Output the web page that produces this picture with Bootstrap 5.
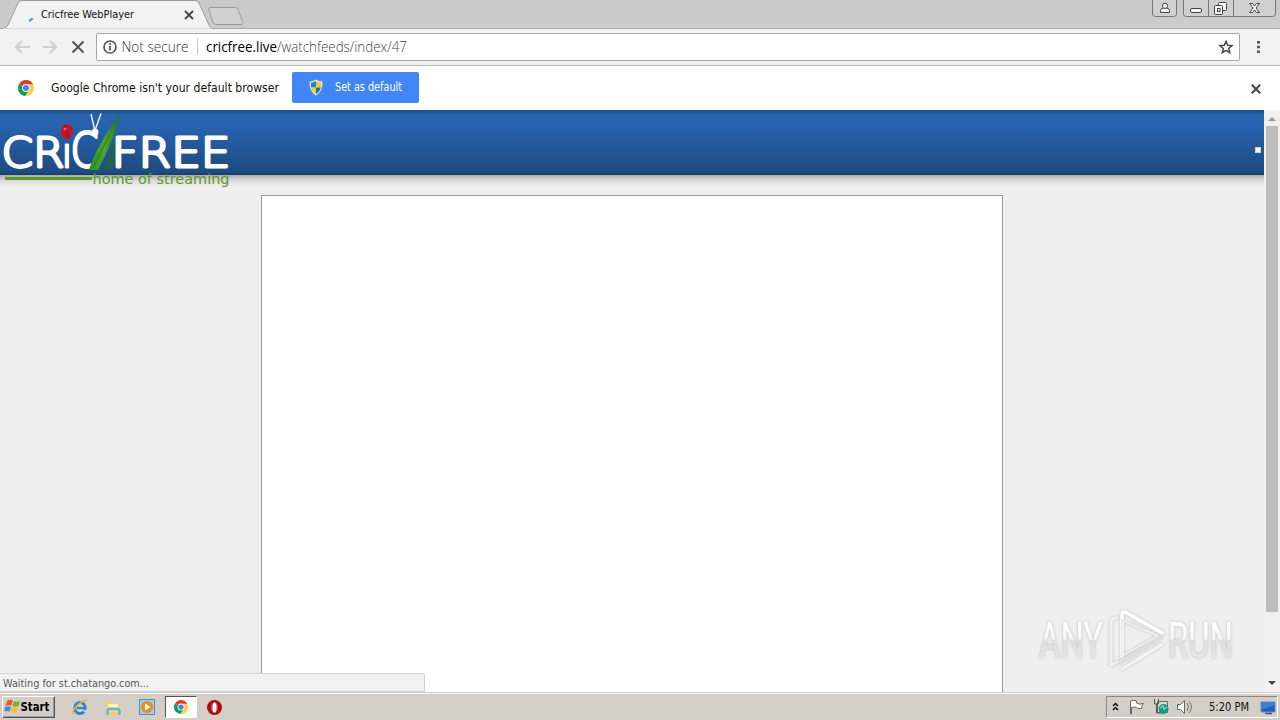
<!DOCTYPE html>
<html lang="en">
<head>
<meta charset="utf-8">
<title>Cricfree WebPlayer</title>
<link href="https://cdn.jsdelivr.net/npm/bootstrap@5.3.0/dist/css/bootstrap.min.css" rel="stylesheet">
<style>
body{height:720px;overflow:hidden;font-family:"DejaVu Sans Condensed","DejaVu Sans","Noto Sans",sans-serif;font-size:11px;line-height:1;color:#111;background:#efefef}
svg{display:block;flex:none;overflow:visible}
svg text{white-space:pre}
.tabstrip{height:29px;background:linear-gradient(#c9c9c9,#cdcdcd)}
.toolbar{height:37px;background:#f2f2f2;border-bottom:1px solid #b5b5b5;padding:4px 11px 4px 13px}
.omnibox{height:28px;width:1144px;border:1px solid #a7a7a7;border-radius:2px;margin-left:10px;padding:0 6px}
.address{font-family:"Open Sans","Noto Sans",sans-serif;font-weight:300}
.infobar{height:44px;padding:0 18px 2px 17px}
.default-btn{width:127px;height:31px;background:#4285f4;border-radius:2px;padding:0 16px 0 16px;border:0}
.viewport{height:582px;background:#efefef}
.site-head{height:65px;background:linear-gradient(#1c4d83 0,#2863b0 5px,#2863b0 14px,#1e4b80 62px,#173b65);}
.head-shadow{height:11px;background:linear-gradient(#a9a9a9,#d8d8d8 45%,#efefef)}
.player{width:742px;height:497px;margin:9px 0 0 261px;border:1px solid #999;border-bottom:0}
.logo{left:0;top:0}
.dot{width:6px;height:6px;right:3px;top:37px;background:#fff;border:1px solid #c8d0e4}
.watermark{left:1030px;top:495px}
.status{left:0;bottom:0;width:425px;height:19px;background:#f2f2f2;border:1px solid #d2d2d2;border-left:0;border-radius:0 3px 0 0;padding-left:3px}
.scroller{width:16px;background:#f1f1f1}
.thumb{width:12px;height:486px;background:#bdbdbd}
.taskbar{height:28px;background:#d5cec6;border-top:1px solid #d0cfc7;box-shadow:inset 0 1px #fff;padding:3px 2px 2px}
.start{width:53px;height:22px;border:1px solid;border-color:#fff #555 #555 #fff;box-shadow:inset -1px -1px #999;padding:0 2px;flex:none}
.active-task{width:32px;height:22px;border:1px solid;border-color:#555 #fff #fff #555;background:#fff}
.tray{width:172px;height:22px;border:1px solid;border-color:#888 #fff #fff #888}
</style>
</head>
<body class="d-flex flex-column">
<svg width="0" height="0" class="position-absolute">
<defs>
<g id="chrome"><circle cx="8" cy="8" r="8" fill="#fff"/><path d="M8 8 1.100 4A8 8 0 0 1 15 4z" fill="#df3a2d"/><path d="M8 8 1.100 4A8 8 0 0 0 7.400 16L11.400 10z" fill="#159b58"/><path d="M8 4.200H15A8 8 0 0 1 7.400 16L11.300 10z" fill="#fdce43"/><circle cx="8" cy="8" r="4" fill="#f8f8f8"/><circle cx="8" cy="8" r="3" fill="#4285f4"/></g>
<linearGradient id="mark" gradientUnits="userSpaceOnUse" x1="0" y1="622" x2="0" y2="659"><stop offset="0" stop-color="#fff"/><stop offset=".46" stop-color="#f8f8f8"/><stop offset=".5" stop-color="#dfdfdf"/><stop offset="1" stop-color="#e6e6e6"/></linearGradient>
<filter id="soft" x="-10%" y="-20%" width="120%" height="140%"><feDropShadow dx="0" dy="0" stdDeviation="1.600" flood-color="#999" flood-opacity=".6"/></filter>
<linearGradient id="blade"><stop offset="0" stop-color="#2b8d1d"/><stop offset=".5" stop-color="#4fa52d"/><stop offset="1" stop-color="#247324"/></linearGradient>
</defs>
</svg>

<header class="tabstrip flex-shrink-0">
<svg width="1280" height="29" viewBox="0 0 1280 29">
<path d="M0 28.500H1280" stroke="#aaa"/>
<path d="M0 29Q6 29 8 25L18 3Q19 .5 22 .5H195Q198 .5 199 3L209 25Q210 28.500 214 29z" fill="#f2f2f2" stroke="#999"/>
<path d="M3 29.500H213" stroke="#f2f2f2" stroke-width="2"/>
<path d="M29 21q3-1 3.500-3" fill="none" stroke="#4b8fdc" stroke-width="2"/>
<text x="41" y="18" font-size="11" textLength="93" lengthAdjust="spacingAndGlyphs" fill="#111">Cricfree WebPlayer</text>
<path d="m185 11 8 8m0-8-8 8" stroke="#444" stroke-width="1.800"/>
<path d="M210 7.500h25q2 0 3 2l5 13q0 2-2 2h-25q-2 0-3-2l-4-12q-1-3 1-3z" fill="#d1d1d1" stroke="#999"/>
<g fill="#d0d0d0" stroke="#777"><path d="M1152.500 0V14q0 2.500 3 2.500h18q3 0 3-2.500V0M1183.500 0V14q0 2.500 3 2.500h86q3 0 3-2.500V0"/><path d="M1208.500 0v16m25-16v16"/></g>
<g fill="#f5f5f5" stroke="#444"><path d="M1160.500 12.500v-2q0-2 3-2.500h3q3 .5 3 2.500v2z"/><circle cx="1165" cy="5.800" r="2.600"/><rect x="1190.500" y="8.500" width="11" height="4" rx="1.500"/><rect x="1218.500" y="2.500" width="8" height="8" rx="1"/><rect x="1214.500" y="5.500" width="8" height="9" rx="1"/><rect x="1217.500" y="8.500" width="2.500" height="3"/><path d="M1249.500 3.500h3l2 2.500 2-2.500h3l-3.500 4.500 3.500 4.500h-3l-2-2.500-2 2.500h-3l3.500-4.500z"/></g>
</svg>
</header>

<nav class="toolbar d-flex align-items-center flex-shrink-0">
<svg width="73" height="28" viewBox="13 33 73 28" fill="none"><path d="M30 47H16m6-6-6 6 6 6M43 47h13m-6-6 6 6-6 6" stroke="#d0d0d0" stroke-width="2"/><path d="m72.500 41.500 11 11m0-11-11 11" stroke="#555" stroke-width="2"/></svg>
<div class="omnibox bg-white d-flex align-items-center justify-content-between">
<svg class="address" width="340" height="26" viewBox="103 34 340 26"><circle cx="110" cy="47" r="6" fill="none" stroke="#555" stroke-width="1.700"/><path d="M110 46v4.500m0-7.500v1.800" stroke="#555" stroke-width="1.800"/><text x="121.500" y="52" font-size="14" fill="#333" textLength="67" lengthAdjust="spacingAndGlyphs">Not secure</text><path d="M197.500 39v16" stroke="#c5c5c5"/><text x="206" y="52" font-size="14" fill="#444" textLength="201" lengthAdjust="spacingAndGlyphs"><tspan font-weight="400" fill="#000">cricfree.live</tspan>/watchfeeds/index/47</text></svg>
<svg width="14" height="14" viewBox="0 0 14 14"><path d="m7 1.300 1.700 3.900 4.200.4-3.200 2.800 1 4.200L7 10.400l-3.700 2.200 1-4.200L1.100 5.600l4.200-.4z" fill="none" stroke="#444" stroke-width="1.500"/></svg>
</div>
<svg class="ms-auto me-2" width="4" height="14" viewBox="0 0 4 14" fill="#555"><path d="M0 1h3v2.500H0zM0 5.700h3v2.500H0zM0 10.400h3v2.500H0z"/></svg>
</nav>

<section class="infobar d-flex align-items-center bg-white flex-shrink-0">
<svg width="275" height="32" viewBox="17 71 275 32"><use href="#chrome" transform="translate(18 80)"/><text x="51" y="92" font-size="12.500" fill="#111" textLength="228" lengthAdjust="spacingAndGlyphs">Google Chrome isn't your default browser</text></svg>
<button class="default-btn d-flex align-items-center">
<svg width="95" height="18" viewBox="308 78 95 18"><path d="M316 79.500q3 2 6.500 2 .5 10-6.500 14-7-4-6.500-14 3.500 0 6.500-2" fill="#e9e9cf"/><path d="M316 81q-2.500 1.500-5 1.600v4.900h5z" fill="#1689ce"/><path d="M316 81q2.500 1.500 5 1.600v4.900h-5zM311.200 87.500H316V94q-4-2.500-4.800-6.500" fill="#f7ca27"/><path d="M316 87.500h4.800Q320 91.500 316 94z" fill="#1774b5"/><text x="335" y="91" font-size="11.500" fill="#fff" textLength="67" lengthAdjust="spacingAndGlyphs">Set as default</text></svg>
</button>
<svg class="ms-auto position-relative mt-1" width="12" height="12" viewBox="0 0 12 12"><path d="m1.800 1.800 8.400 8.400m0-8.400-8.400 8.400" stroke="#444" stroke-width="2"/></svg>
</section>

<main class="viewport position-relative d-flex flex-shrink-0">
<div class="flex-grow-1 position-relative overflow-hidden">
<div class="site-head"></div><div class="head-shadow"></div>
<div class="player bg-white"></div>
<svg class="logo position-absolute" width="240" height="80" viewBox="0 110 240 80">
<path d="M108 159q5-5 3-20 11 15 2 28-6 4-12 0 7-1 7-8" fill="#236247"/>
<g fill="#fff" stroke="#fff" stroke-width="2.800" stroke-linejoin="round" font-family="'DejaVu Sans Light','DejaVu Sans',sans-serif" font-weight="200">
<text x="1.500" y="166.500" font-size="41" textLength="63" lengthAdjust="spacingAndGlyphs">CR</text>
<text x="111.500" y="166.500" font-size="41" textLength="119" lengthAdjust="spacingAndGlyphs">FREE</text>
<text x="62" y="166.500" font-size="41" textLength="10" lengthAdjust="spacingAndGlyphs">ı</text>
<text x="70.500" y="167" font-size="48" textLength="28" lengthAdjust="spacingAndGlyphs">C</text></g>
<circle cx="95" cy="132" r="3.500" fill="#fff"/><path d="m94.500 129-3.500-15m4.500 15 5.500-15.500" stroke="#eef5ff" stroke-width="1.400"/>
<ellipse cx="67" cy="131.500" rx="6" ry="7.500" fill="#c71323"/><path d="m64 125 5 13" stroke="#8b1019"/><circle cx="65" cy="129" r="1.500" fill="#ee5960"/>
<path d="M89 170q7-24 31-55-7 27-22 55z" fill="url(#blade)"/><path d="m93 168 23-47" stroke="#267d1f"/>
<path d="M5 178.500h87" stroke="#599b27" stroke-width="3"/>
<text x="92.500" y="184" font-family="'DejaVu Sans',sans-serif" font-size="14" fill="#599b27" textLength="137" lengthAdjust="spacingAndGlyphs">home of streaming</text>
</svg>
<div class="dot position-absolute"></div>
<svg class="watermark position-absolute" width="215" height="75" viewBox="1030 605 215 75">
<g filter="url(#soft)" fill="url(#mark)" font-family="'Roboto',sans-serif" font-size="50"><text x="1039" y="658" textLength="64" lengthAdjust="spacingAndGlyphs">ANY</text><text x="1168" y="658" textLength="65" lengthAdjust="spacingAndGlyphs">RUN</text></g>
<g filter="url(#soft)" fill="none" stroke-width="3.500" stroke-linejoin="round" stroke-linecap="round"><path d="M1122 656V616q0-6 5-3l35 20" stroke="#fff"/><path d="m1120 662 41-25" stroke="#dedede"/><path d="M1122 620v36l36-20z" stroke="#ededed" stroke-width="2"/><path d="M1116 618q-5 0-5 5v42l6-3" stroke="#f0f0f0" stroke-width="3"/><path d="m1122 669 39-24" stroke="#f5f5f5" stroke-width="3"/></g>
</svg>
<div class="status position-absolute d-flex align-items-center"><svg width="155" height="15"><text x="0" y="11.500" font-size="11" fill="#555" textLength="146" lengthAdjust="spacingAndGlyphs">Waiting for st.chatango.com...</text></svg></div>
</div>
<aside class="scroller d-flex flex-column align-items-center">
<svg width="16" height="16"><path d="m4 11 4-4 4 4z" fill="#999"/></svg><div class="thumb"></div>
<svg class="mt-auto" width="16" height="17"><path d="m4 6 4 4 4-4z" fill="#444"/></svg>
</aside>
</main>

<footer class="taskbar d-flex align-items-center flex-shrink-0">
<div class="start"><svg width="48" height="20" viewBox="5 697 48 20">
<path d="M7 701q3-2 6-.5l-1.500 5q-3-1-6 .5z" fill="#e85b25"/><path d="M14 701q3 1.500 6 0l-1.500 5q-3 1.500-6-.2z" fill="#70b52d"/><path d="M5 707q3-1.500 6-.2l-1.500 5q-2-1.500-5 0z" fill="#3e8edc"/><path d="M12 707q3 1.500 6 .2l-1.500 5q-3 1.300-6-.5z" fill="#f6bf25"/>
<text x="20.500" y="711" font-size="11.500" font-weight="700" textLength="29" lengthAdjust="spacingAndGlyphs" fill="#000">Start</text></svg></div>
<svg width="110" height="22" viewBox="55 696 110 22">
<ellipse cx="80" cy="708" rx="5.200" ry="5.500" fill="none" stroke="#2587d4" stroke-width="3"/><path d="M77 708h9" stroke="#2587d4" stroke-width="2.200"/><path d="M83.500 710h4v2h-4z" fill="#d5cec6"/><path d="M74 714q-3-1 2-7t11-7" fill="none" stroke="#e7b629" stroke-width="1.500"/>
<path d="M106 702h5l1 2h7v10h-13z" fill="#f2ce62"/><path d="M108 704h10v5h-10z" fill="#fff5bb"/><path d="M106 707h15v5h-15z" fill="#f7dc7f"/><path d="M107.500 715v-4q0-2 2-2h8q2 0 2 2v4" fill="none" stroke="#67b2dc" stroke-width="2.500"/>
<rect x="139.500" y="699.500" width="15" height="15" fill="#a4cbed" stroke="#4e8fc4"/><circle cx="147" cy="707" r="6" fill="#f08b16"/><path d="m145 703.500 5.500 3.500-5.500 3.500z" fill="#fff"/></svg>
<div class="active-task d-flex justify-content-center align-items-center"><svg width="14" height="14" viewBox="0 0 16 16"><use href="#chrome"/></svg></div>
<svg width="34" height="22" viewBox="197 696 34 22"><circle cx="214.500" cy="707.500" r="7.500" fill="#a60e17"/><ellipse cx="214.500" cy="707.500" rx="3.500" ry="5.500" fill="#d84345"/><ellipse cx="214.500" cy="707.500" rx="2" ry="5" fill="#fff"/></svg>
<div class="tray ms-auto"><svg width="170" height="20" viewBox="1107 697 170 20" fill="none">
<path d="m1113 706 2.500-2.500 2.500 2.500m-5 4 2.500-2.500 2.500 2.500" stroke="#111" stroke-width="1.500"/>
<path d="M1130.500 714v-13q3-1.500 6 0v2q3 2 7 .5-2 2-2 5-3 1-5-1-2-1-5 0v6.500z" fill="#fff" stroke="#666"/>
<path d="M1157.500 701.500h10v11h-10z" fill="#d4e1d8" stroke="#666"/><path d="M1154.500 699v5h4v-5m-2 5v9h6" stroke="#555"/><circle cx="1163.500" cy="709" r="5" fill="#159783"/><path d="m1160 708 3-2 1 3 3-2" stroke="#84d5b8" stroke-width="1.500"/>
<path d="M1177.500 704.500h3l4-4v13l-4-4h-3z" fill="#fff" stroke="#666"/><path d="M1187 703q3 4 0 8m2-10q5 6 0 12" stroke="#777"/>
<text x="1209" y="711" font-size="11.500" fill="#111" textLength="40" lengthAdjust="spacingAndGlyphs">5:20 PM</text>
<path d="M1261 702h14v10h-14z" fill="#2361b5" stroke="#608fcd"/><path d="m1261 710 14-5v-3h-14z" fill="#3e80d1"/><path d="M1265 713.500h7" stroke="#355987" stroke-width="1.500"/></svg></div>
</footer>
<script src="https://cdn.jsdelivr.net/npm/bootstrap@5.3.0/dist/js/bootstrap.bundle.min.js"></script>
</body>
</html>
